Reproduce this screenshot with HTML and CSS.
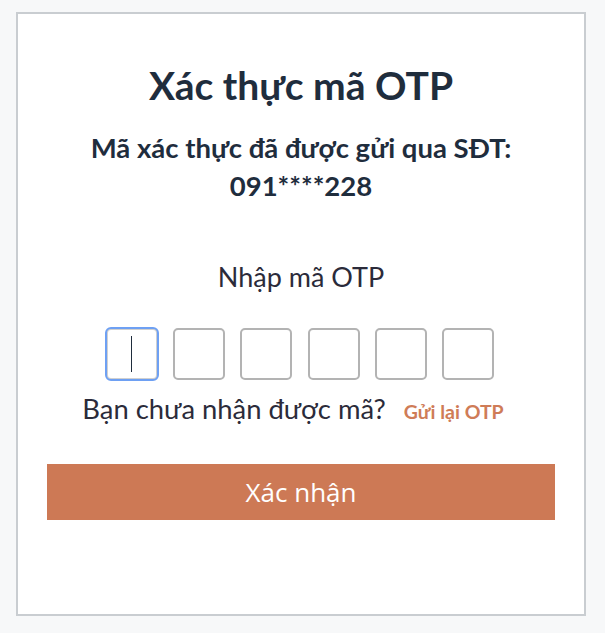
FILE: index.html
```html
<!DOCTYPE html>
<html lang="vi">
<head>
<meta charset="utf-8">
<title>Xác thực mã OTP</title>
<link rel="stylesheet" href="styles.css">
</head>
<body>
<div class="card">
  <h1 class="title">Xác thực mã OTP</h1>
  <p class="subtitle">Mã xác thực đã được gửi qua SĐT:<br>091****228</p>
  <p class="label">Nhập mã OTP</p>
  <div class="otp">
    <div class="box focus"><span class="caret"></span></div>
    <div class="box"></div>
    <div class="box"></div>
    <div class="box"></div>
    <div class="box"></div>
    <div class="box"></div>
  </div>
  <div class="resend">
    <span class="q">Bạn chưa nhận được mã?</span>
    <a class="link">Gửi lại OTP</a>
  </div>
  <button class="btn">Xác nhận</button>
</div>
</body>
</html>
```

FILE: styles.css
```css
html, body {
  margin: 0;
  padding: 0;
  background: #f7f8f9;
}
body {
  padding: 12px 0 0 16px;
  font-family: Lato, "Noto Sans", sans-serif;
  color: #1f2d3d;
}
.card {
  box-sizing: border-box;
  width: 570px;
  height: 604px;
  border: 2px solid #c9cdd1;
  background: #fff;
  padding: 47px 29px 0 29px;
  display: flex;
  flex-direction: column;
  align-items: center;
}
.title {
  margin: 0;
  font-size: 39px;
  font-weight: 700;
  line-height: 48px;
  color: #1f2d3d;
}
.subtitle {
  margin: 20px 0 0;
  font-size: 27.5px;
  font-weight: 700;
  line-height: 38px;
  text-align: center;
}
.label {
  margin: 55px 0 0;
  font-size: 27px;
  font-weight: 400;
  line-height: 34px;
  color: #2b2b3a;
}
.otp {
  margin-top: 34px;
  display: flex;
  gap: 15.4px;
  transform: translateX(-1px);
}
.box {
  box-sizing: border-box;
  width: 52px;
  height: 52px;
  border: 2px solid #b3b3b3;
  border-radius: 5px;
  display: flex;
  align-items: center;
  justify-content: center;
}
.box.focus {
  border-color: #d0d0d0;
  outline: 2px solid #6ea0f3;
  outline-offset: -1px;
}
.caret {
  width: 1.5px;
  height: 36px;
  background: #1f2d3d;
}
.resend {
  margin-top: 12px;
  display: flex;
  align-items: baseline;
  gap: 18px;
  line-height: 34px;
  margin-right: 16px;
}
.q {
  font-size: 27.4px;
  color: #2b2b3a;
}
.link {
  font-size: 19.5px;
  font-weight: 700;
  color: #cf7c57;
}
.btn {
  margin-top: 35px;
  width: 100%;
  height: 56px;
  border: none;
  background: #cd7955;
  color: #fff;
  font-family: "Open Sans", "Noto Sans", sans-serif;
  font-size: 26px;
  padding: 0;
}
```
